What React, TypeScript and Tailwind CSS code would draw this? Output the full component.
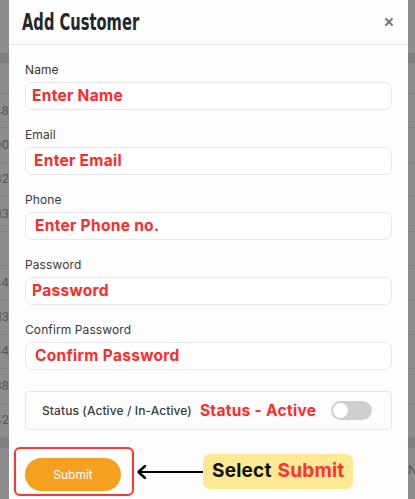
import { X } from "lucide-react";

const fields = [
  { label: "Name", hint: "Enter Name", pad: "pl-[6px]" },
  { label: "Email", hint: "Enter Email", pad: "pl-[8px]" },
  { label: "Phone", hint: "Enter Phone no.", pad: "pl-[9px]" },
  { label: "Password", hint: "Password", pad: "pl-[6px]" },
  { label: "Confirm Password", hint: "Confirm Password", pad: "pl-[9px]" },
];

const rowNums = ["12348", "10200", "13432", "10813", "", "12834", "10913", "12334", "10688", "12342"];

const Backdrop = () => (
  <div className="w-full h-[499px] bg-[#8d8d8d] overflow-hidden font-['Inter',sans-serif]">
    <div className="h-[53px]" />
    <div className="h-[10px] bg-[#7f7f7f]" />
    <div className="h-[31px] border-b border-[#7c7c7c]" />
    {rowNums.map((n, i) => (
      <div key={i} className="h-[34.4px] border-b border-[#808080] flex items-center">
        <div className="w-[9px] overflow-hidden flex justify-end">
          <span className="text-[12px] text-[#555] whitespace-nowrap">{n}</span>
        </div>
      </div>
    ))}
    <div className="h-[10px] bg-[#7f7f7f]" />
    <div className="h-[13px]" />
    <div className="flex justify-end">
      <span className="w-[7px] overflow-hidden text-[12px] text-[#555]">N</span>
    </div>
  </div>
);

const Toggle = () => (
  <div className="w-[41px] h-[19px] rounded-full bg-[#cfcfcf] flex items-center px-[2px]">
    <div className="w-[15px] h-[15px] rounded-full bg-white" />
  </div>
);

const Arrow = () => (
  <svg width="67" height="16" viewBox="0 0 67 16" className="block">
    <path d="M67 8H3" stroke="#000" strokeWidth="2.2" />
    <path d="M9 2L2.5 8L9 14" stroke="#000" strokeWidth="2.4" fill="none" strokeLinecap="round" strokeLinejoin="round" />
  </svg>
);

export default function App() {
  return (
    <div className="relative w-[415px] h-[499px] overflow-hidden">
      <Backdrop />
      <div className="absolute left-[9px] top-0 w-[399px] h-[520px] bg-[#fdfdfd] font-['Inter',sans-serif]">
        <div className="h-[45px] border-b border-[#e6e6e6] flex items-center justify-between pl-[13px] pr-[13px]">
          <h2 className="font-['DejaVu_Sans_Condensed','DejaVu_Sans',sans-serif] font-bold text-[23px] text-[#23262b] scale-x-[0.71] origin-left whitespace-nowrap leading-none">
            Add Customer
          </h2>
          <X className="w-[12px] h-[12px] text-[#777]" strokeWidth={4} />
        </div>
        <div className="px-[16px] pt-[18px]">
          {fields.map((f) => (
            <div key={f.label} className="mb-[18px]">
              <div className="text-[12px] leading-[14px] text-[#3a3a3a] mb-[5px] tracking-[0.1px]">{f.label}</div>
              <div className={`h-[28px] rounded-[7px] border border-[#ebe7e4] bg-white flex items-center ${f.pad}`}>
                <span className="text-[15.5px] font-bold text-[#ff2a2a] leading-none tracking-[0.3px]">{f.hint}</span>
              </div>
            </div>
          ))}
          <div className="mt-[21px] h-[39px] rounded-[4px] border border-[#e6e6e6] flex items-center pl-[16px]">
            <span className="text-[12px] text-[#3a3a3a] font-medium tracking-[0.1px]">Status (Active / In-Active)</span>
            <span className="ml-[8px] text-[15.5px] font-bold text-[#ff2a2a] tracking-[0.3px]">Status - Active</span>
            <div className="ml-[15px]">
              <Toggle />
            </div>
          </div>
          <div className="mt-[17px] flex items-center ml-[-11px]">
            <div className="w-[120px] h-[49px] border-2 border-[#ff3535] rounded-[6px] pl-[9px] pt-[9px]">
              <button className="w-[96px] h-[33px] rounded-full bg-[#f5a11f] text-white text-[12px]">Submit</button>
            </div>
            <div className="ml-[2px]">
              <Arrow />
            </div>
            <div className="h-[35px] px-[9px] rounded-[7px] bg-[#fde993] flex items-center text-[19px] font-bold tracking-[0.2px]">
              <span className="text-[#111]">Select</span>
              <span className="ml-[6px] text-[#ff3232]">Submit</span>
            </div>
          </div>
        </div>
      </div>
    </div>
  );
}
